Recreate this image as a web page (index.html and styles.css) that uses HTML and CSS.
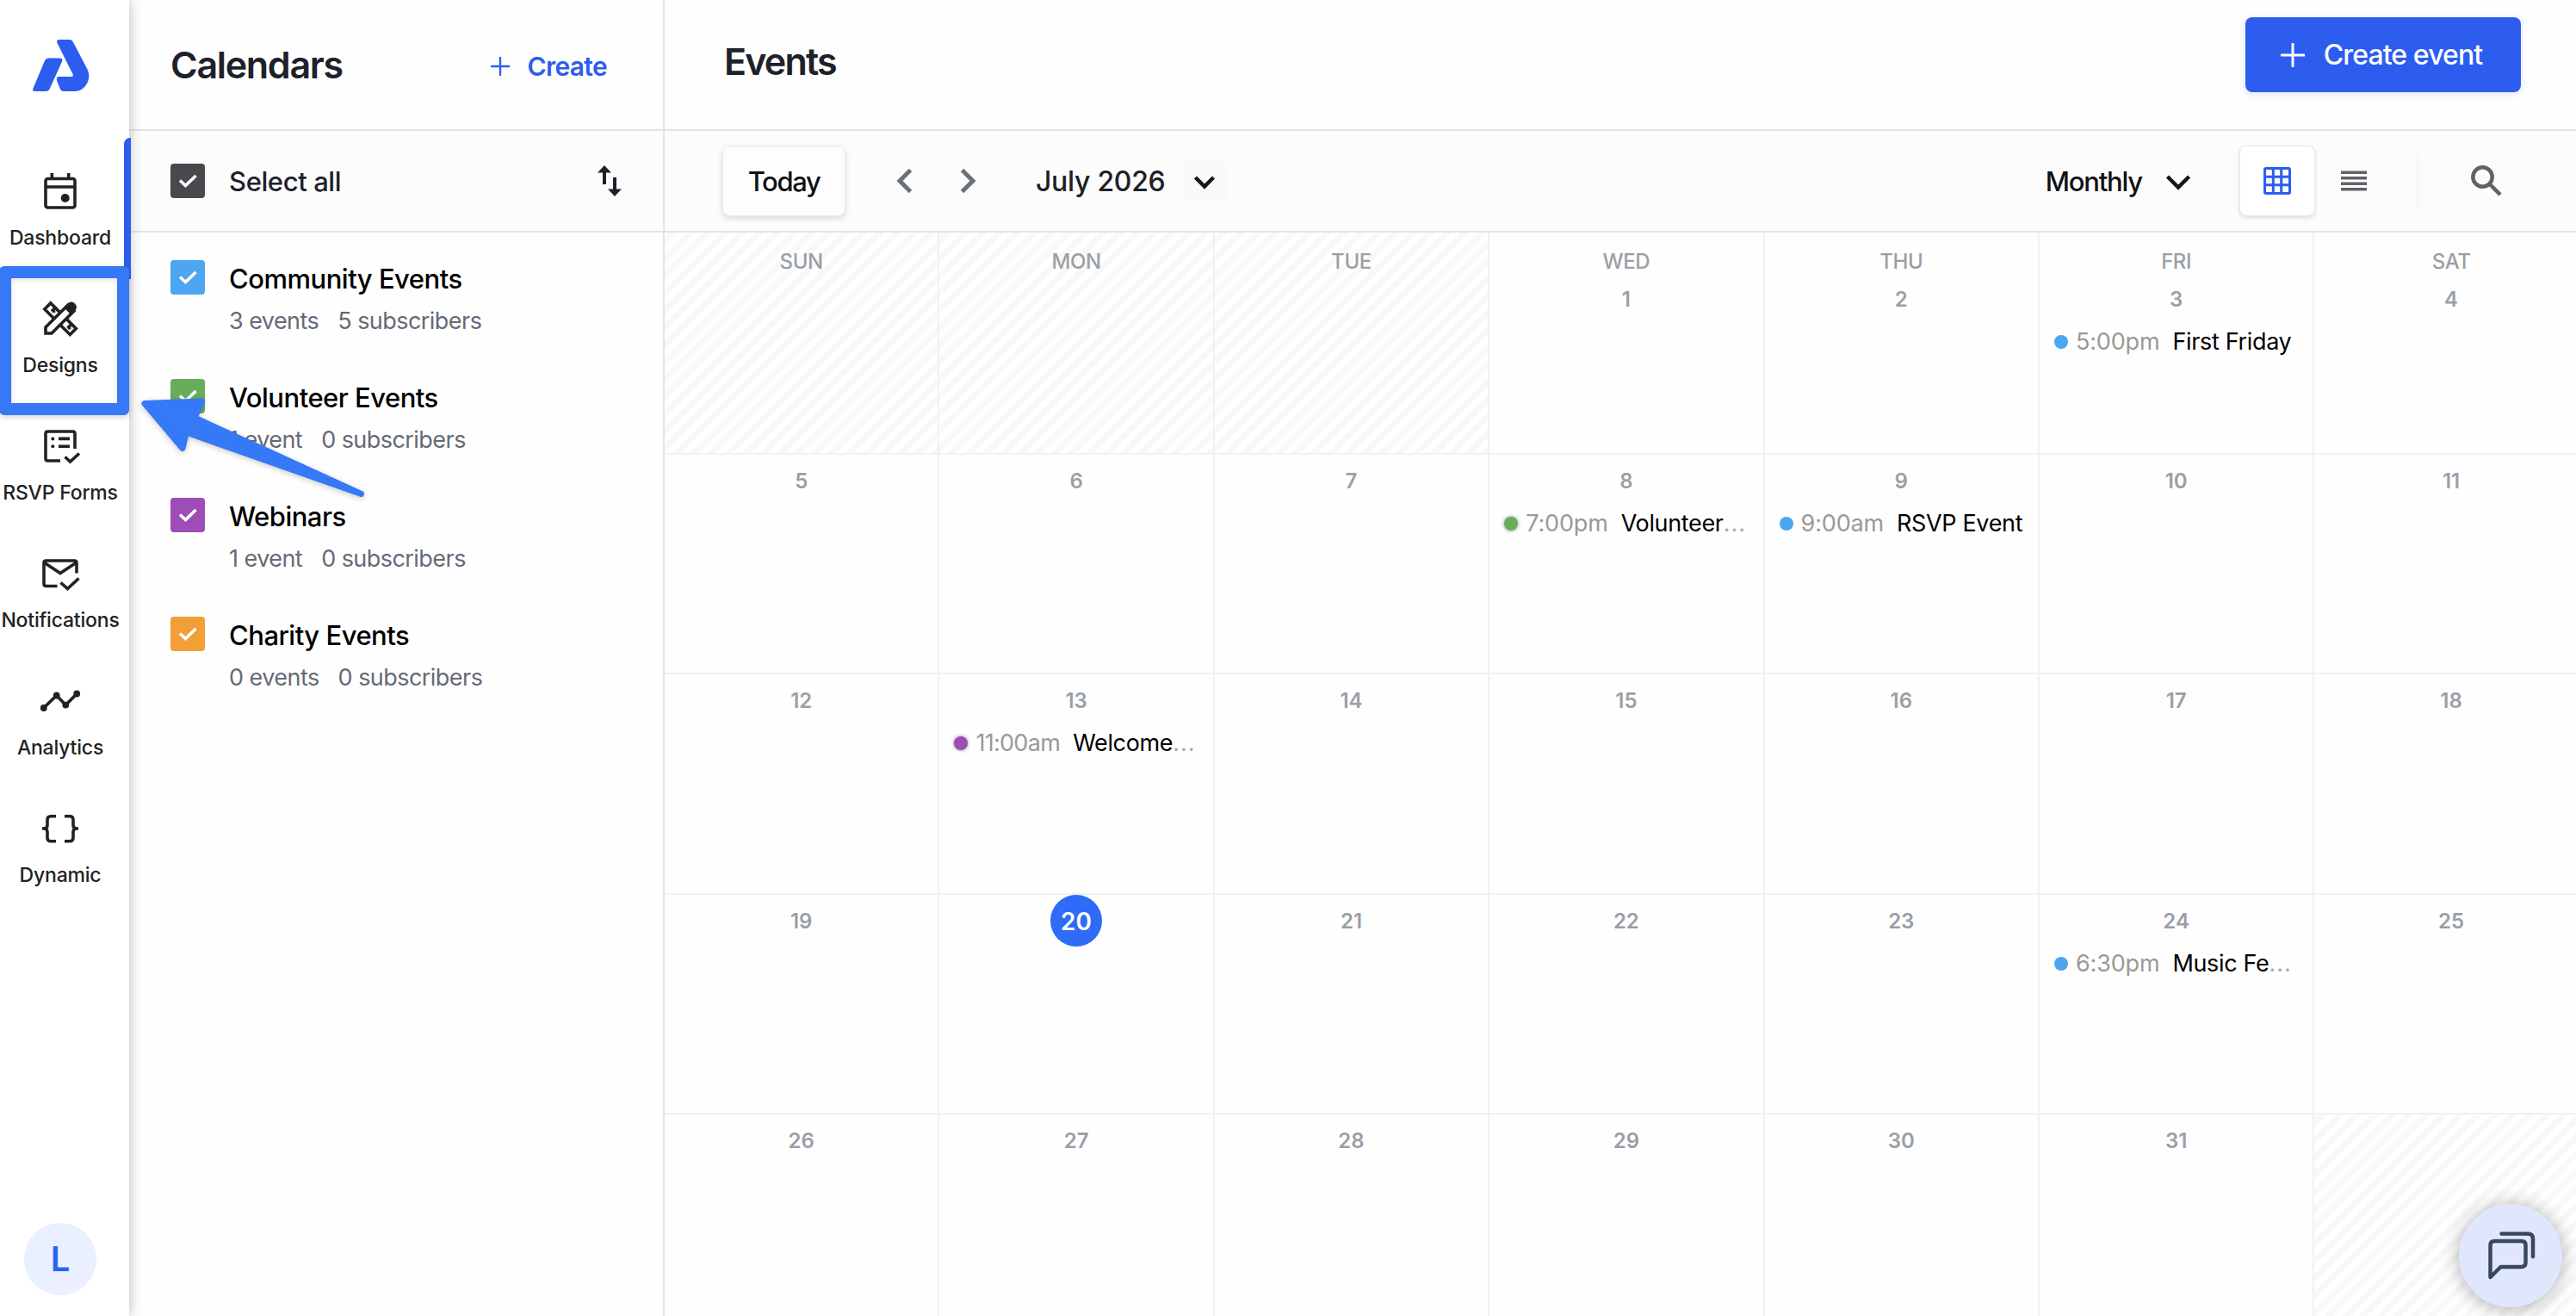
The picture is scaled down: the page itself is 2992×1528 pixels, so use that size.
FILE: index.html
```html
<!DOCTYPE html>
<html lang="en">
<head>
    <meta charset="UTF-8">
    <meta name="viewport" content="width=device-width, initial-scale=1">
    <title>Events</title>
    <link rel="stylesheet" href="styles.css">
</head>
<body>
    <svg width="0" height="0" class="sprite">
        <symbol id="check" viewBox="0 0 40 40">
            <path d="M11 19.500l6.500 6L29.500 14" fill="none" stroke="#fff" stroke-width="3.600"/>
        </symbol>
        <symbol id="plus" viewBox="0 0 28 28">
            <path d="M14 1v26M1 14h26" fill="none" stroke="currentColor" stroke-width="3" stroke-linecap="round"/>
        </symbol>
    </svg>

    <div class="app">
        <!-- left navigation -->
        <nav class="nav">
            <a class="logo">
                <svg width="66" height="60" viewBox="0 0 66 60">
                    <path d="M18.500 21.500h13q4 0 2.500 4L20 56.500q-1.500 3.500-5 3.500H2.500q-3.500 0-2-3.500L14 24.500q1.500-3 4.500-3z"/>
                    <path d="M31 0h11.500q3 0 4.500 3l16.500 31.500C69 46 61 60 48.500 60H36q-3.200 0-4.200-3L28 47.500q-1.200-4.500 3-4.500h13.500q3.500 0 2-3L28.500 4q-1.500-4 2.500-4z"/>
                </svg>
            </a>
            <ul class="nav-list">
                <li class="nav-item active">
                    <svg class="nav-icon" viewBox="0 0 48 48">
                        <rect x="7" y="9.500" width="34" height="33.500" rx="2.500"/>
                        <path d="M7 19h34M14.300 3v7M33.700 3v7"/>
                        <circle class="solid" cx="29.700" cy="32" r="5"/>
                    </svg>
                    <span>Dashboard</span>
                </li>
                <li class="nav-item">
                    <svg class="nav-icon" viewBox="0 0 48 48">
                        <path class="paper" d="M5.800 12.900l7-7 29.500 29.500-7 7z"/>
                        <path d="M18 11.500l-4 4M37 30.500l-4.500 4.500M16.500 14.500v2.500M34.500 34v2.500"/>
                        <path class="paper" d="M7 41v-7L33 8l7 7-26 26z"/>
                        <path class="solid" d="M28 11l4.500-4.500q4.500-4 8.500 0 3.800 4 0 8.500L36.500 19.500z"/>
                    </svg>
                    <span>Designs</span>
                </li>
                <li class="nav-item">
                    <svg class="nav-icon" viewBox="0 0 48 48">
                        <path d="M24 41H9.500q-2.500 0-2.500-2.500V9.500Q7 7 9.500 7h29q2.500 0 2.500 2.500V27M29.500 36.500l6 5.500L46 32.500M22 15.400h13M22 24.200h13"/>
                        <circle class="solid" cx="15.300" cy="15.400" r="2"/>
                        <circle class="solid" cx="15.300" cy="24.200" r="2"/>
                    </svg>
                    <span>RSVP Forms</span>
                </li>
                <li class="nav-item">
                    <svg class="nav-icon" viewBox="0 0 48 48">
                        <path d="M20.500 38.500H7.500Q5 38.500 5 36V11.500Q5 9 7.500 9h33q2.500 0 2.500 2.500V23.500M5 11l19 12.500L43 11M24.500 34.500l8 7L45.500 29.500"/>
                    </svg>
                    <span>Notifications</span>
                </li>
                <li class="nav-item">
                    <svg class="nav-icon" viewBox="0 0 48 48">
                        <path d="M4.300 32.400l15.400-14.900 10.600 11.100L43.700 15"/>
                        <circle class="solid" cx="4.800" cy="32" r="3.900"/>
                        <circle class="solid" cx="19.700" cy="17.500" r="3.900"/>
                        <circle class="solid" cx="30.300" cy="28.600" r="3.900"/>
                        <circle class="solid" cx="43.200" cy="15.500" r="3.900"/>
                    </svg>
                    <span>Analytics</span>
                </li>
                <li class="nav-item">
                    <svg class="nav-icon" viewBox="0 0 48 48">
                        <path d="M19 9.700h-6q-4 0-4 4V20q0 4-4 4h-2 2q4 0 4 4v6.700q0 4 4 4h6M29 9.700h6q4 0 4 4V20q0 4 4 4h2-2q-4 0-4 4v6.700q0 4-4 4h-6"/>
                    </svg>
                    <span>Dynamic</span>
                </li>
            </ul>
            <div class="avatar">L</div>
        </nav>

        <!-- calendars panel -->
        <aside class="calendars">
            <header class="calendars-head">
                <h2 class="calendars-title">Calendars</h2>
                <a class="create-link"><svg width="22" height="22"><use href="#plus"/></svg><span>Create</span></a>
            </header>
            <div class="select-all">
                <span class="checkbox dark"><svg><use href="#check"/></svg></span>
                <span class="select-all-text">Select all</span>
                <svg class="sort" width="30" height="38" viewBox="0 0 30 38">
                    <path d="M9 1l8 8.500h-6V23H7V9.500H1zM21 37l-8-8.500h6V15h4v13.500h6z"/>
                </svg>
            </div>
            <ul class="calendar-list">
                <li class="calendar-item">
                    <span class="checkbox blue"><svg><use href="#check"/></svg></span>
                    <div>
                        <div class="calendar-name">Community Events</div>
                        <div class="calendar-meta"><span>3 events</span><span>5 subscribers</span></div>
                    </div>
                </li>
                <li class="calendar-item">
                    <span class="checkbox green"><svg><use href="#check"/></svg></span>
                    <div>
                        <div class="calendar-name">Volunteer Events</div>
                        <div class="calendar-meta"><span>1 event</span><span>0 subscribers</span></div>
                    </div>
                </li>
                <li class="calendar-item">
                    <span class="checkbox purple"><svg><use href="#check"/></svg></span>
                    <div>
                        <div class="calendar-name">Webinars</div>
                        <div class="calendar-meta"><span>1 event</span><span>0 subscribers</span></div>
                    </div>
                </li>
                <li class="calendar-item">
                    <span class="checkbox orange"><svg><use href="#check"/></svg></span>
                    <div>
                        <div class="calendar-name">Charity Events</div>
                        <div class="calendar-meta"><span>0 events</span><span>0 subscribers</span></div>
                    </div>
                </li>
            </ul>
        </aside>

        <!-- events -->
        <main class="events">
            <header class="events-head">
                <h1 class="events-title">Events</h1>
                <button class="btn-create"><svg width="28" height="28"><use href="#plus"/></svg><span>Create event</span></button>
            </header>
            <div class="toolbar">
                <button class="btn-today">Today</button>
                <svg class="prev" width="20" height="30" viewBox="0 0 20 30"><path d="M16.500 2.500L4 15l12.500 12.500"/></svg>
                <svg class="next" width="20" height="30" viewBox="0 0 20 30"><path d="M3.500 2.500L16 15 3.500 27.500"/></svg>
                <span class="month">July 2026</span>
                <span class="month-toggle"><svg width="26" height="18" viewBox="0 0 26 18"><path d="M2.500 3L13 13.500 23.500 3"/></svg></span>
                <span class="view">Monthly</span>
                <svg class="view-arrow" width="30" height="20" viewBox="0 0 30 20"><path d="M2.500 3L15 15.500 27.500 3"/></svg>
                <span class="btn-grid">
                    <svg width="32" height="32" viewBox="0 0 32 32"><path d="M3 1.500h26q1.500 0 1.500 1.500v26q0 1.500-1.500 1.500H3q-1.500 0-1.500-1.500V3q0-1.500 1.500-1.500zM11.300 1.500v29M20.700 1.500v29M1.500 11.300h29M1.500 20.700h29"/></svg>
                </span>
                <svg class="list" width="30" height="24" viewBox="0 0 30 24"><path d="M0 2.300h30M0 8.800h30M0 15.200h30M0 21.700h30"/></svg>
                <span class="divider"></span>
                <svg class="search" width="36" height="36" viewBox="0 0 36 36"><circle cx="13.500" cy="13.500" r="11.200"/><path d="M21.500 21.500L34 34"/></svg>
            </div>

            <div class="month-grid">
                <div class="day off"><b>SUN</b></div>
                <div class="day off"><b>MON</b></div>
                <div class="day off"><b>TUE</b></div>
                <div class="day"><b>WED</b><i>1</i></div>
                <div class="day"><b>THU</b><i>2</i></div>
                <div class="day"><b>FRI</b><i>3</i>
                    <div class="event"><span class="dot blue"></span><span class="time">5:00pm</span><span class="name">First Friday</span></div>
                </div>
                <div class="day"><b>SAT</b><i>4</i></div>

                <div class="day"><i>5</i></div>
                <div class="day"><i>6</i></div>
                <div class="day"><i>7</i></div>
                <div class="day"><i>8</i>
                    <div class="event"><span class="dot green"></span><span class="time">7:00pm</span><span class="name">Volunteer</span><span class="more">...</span></div>
                </div>
                <div class="day"><i>9</i>
                    <div class="event"><span class="dot blue"></span><span class="time">9:00am</span><span class="name">RSVP Event</span></div>
                </div>
                <div class="day"><i>10</i></div>
                <div class="day"><i>11</i></div>

                <div class="day"><i>12</i></div>
                <div class="day"><i>13</i>
                    <div class="event"><span class="dot purple"></span><span class="time late">11:00am</span><span class="name">Welcome</span><span class="more">...</span></div>
                </div>
                <div class="day"><i>14</i></div>
                <div class="day"><i>15</i></div>
                <div class="day"><i>16</i></div>
                <div class="day"><i>17</i></div>
                <div class="day"><i>18</i></div>

                <div class="day"><i>19</i></div>
                <div class="day"><i class="today">20</i></div>
                <div class="day"><i>21</i></div>
                <div class="day"><i>22</i></div>
                <div class="day"><i>23</i></div>
                <div class="day"><i>24</i>
                    <div class="event"><span class="dot blue"></span><span class="time">6:30pm</span><span class="name">Music Fe</span><span class="more">...</span></div>
                </div>
                <div class="day"><i>25</i></div>

                <div class="day"><i>26</i></div>
                <div class="day"><i>27</i></div>
                <div class="day"><i>28</i></div>
                <div class="day"><i>29</i></div>
                <div class="day"><i>30</i></div>
                <div class="day"><i>31</i></div>
                <div class="day off"></div>
            </div>
        </main>
    </div>

    <!-- highlight over the Designs item -->
    <div class="marker"></div>
    <svg class="arrow" width="300" height="140" viewBox="0 0 300 140">
        <path d="M18 18.500L84.500 16 76 35 269.500 123.500 66.500 52 62 70.500z"/>
    </svg>

    <div class="chat">
        <svg width="60" height="60" viewBox="0 0 60 60">
            <path d="M6.500 51V14q0-5 5-5h31q5 0 5 5v20q0 5-5 5H18.500zM19.500 .5H50q6 0 6 6V27"/>
        </svg>
    </div>
</body>
</html>
```
FILE: styles.css
```css
*{
    box-sizing: border-box;
}
body{
    margin: 0;
    height: 1528px;
    overflow: hidden;
    position: relative;
    background-color: #fefefe;
    color: #1d2129;
    font-family: Inter, "Liberation Sans", sans-serif;
    font-weight: 500;
}
h1, h2, ul{
    margin: 0;
    padding: 0;
    list-style: none;
}
button{
    font: inherit;
    border: 0;
    padding: 0;
}
svg{
    display: block;
    flex: none;
    overflow: visible;
}
.sprite{
    position: absolute;
}
.app{
    display: flex;
    height: 1528px;
}

/* nav */
.nav{
    position: relative;
    z-index: 1;
    flex: none;
    width: 150px;
    padding-right: 10px;
    display: flex;
    flex-direction: column;
    align-items: center;
    background-color: #fff;
    box-shadow: 0 0 14px rgba(0, 0, 0, .28);
}
.logo{
    height: 160px;
    padding: 46px 0 0 1px;
    fill: #2c5def;
}
.nav-list{
    flex: 1;
    width: 140px;
}
.nav-item{
    position: relative;
    height: 148px;
    padding-top: 38px;
    display: flex;
    flex-direction: column;
    align-items: center;
    color: #222;
    font-size: 23px;
    line-height: 30px;
    letter-spacing: -.2px;
    white-space: nowrap;
}
.nav-item.active::after{
    content: "";
    position: absolute;
    left: 144px;
    top: 0;
    width: 8px;
    height: 164px;
    border-radius: 7px 0 0 0;
    background-color: #2c5def;
}
.nav-icon{
    width: 48px;
    height: 48px;
    margin-bottom: 15px;
    fill: none;
    stroke: #222;
    stroke-width: 3.6;
}
.nav-icon .solid{
    fill: #222;
    stroke: none;
}
.nav-icon .paper{
    fill: #fff;
}
.avatar{
    width: 84px;
    height: 84px;
    margin-bottom: 24px;
    border-radius: 50%;
    background-color: #eaf0ff;
    color: #2962f6;
    font-size: 40px;
    font-weight: 600;
    line-height: 84px;
    text-align: center;
}

/* calendars panel */
.calendars{
    flex: none;
    width: 622px;
    border-right: 2px solid #e3e3e3;
}
.calendars-head{
    height: 152px;
    padding: 2px 65px 2px 48px;
    display: flex;
    align-items: center;
    justify-content: space-between;
    border-bottom: 2px solid #e3e3e3;
}
.calendars-title{
    font-size: 43px;
    font-weight: 600;
    letter-spacing: -1.3px;
}
.create-link{
    display: flex;
    align-items: center;
    gap: 21px;
    padding-top: 4px;
    color: #2c5def;
    font-size: 30px;
    font-weight: 600;
    letter-spacing: -.7px;
}
.select-all{
    height: 118px;
    padding: 0 47px 0 48px;
    display: flex;
    align-items: center;
    background-color: #fcfcfc;
    border-bottom: 2px solid #e3e3e3;
    font-size: 31px;
}
.select-all-text{
    flex: 1;
    margin-left: 28px;
    letter-spacing: -.4px;
}
.sort{
    fill: #1d2129;
}
.checkbox{
    flex: none;
    width: 40px;
    height: 40px;
    border-radius: 4px;
}
.checkbox svg{
    width: 40px;
    height: 40px;
}
.dark{ background-color: #47494d; }
.blue{ background-color: #4da6ef; }
.green{ background-color: #68ac5c; }
.purple{ background-color: #9f4db6; }
.orange{ background-color: #f29f38; }
.calendar-list{
    padding: 32px 0 0 48px;
}
.calendar-item{
    height: 138px;
    display: flex;
    gap: 28px;
    color: #000;
}
.calendar-name{
    font-size: 31px;
    line-height: 44px;
    letter-spacing: -.5px;
}
.calendar-meta{
    display: flex;
    gap: 22px;
    margin-top: 9px;
    font-size: 27px;
    font-weight: 400;
    line-height: 36px;
    letter-spacing: -.55px;
    color: #666a76;
}

/* events */
.events{
    flex: 1;
    min-width: 0;
    overflow: hidden;
}
.events-head{
    height: 152px;
    padding: 0 64px 0 69px;
    display: flex;
    justify-content: space-between;
    border-bottom: 2px solid #e3e3e3;
}
.events-title{
    font-size: 43px;
    font-weight: 600;
    line-height: 143px;
    letter-spacing: -1.8px;
}
.btn-create{
    width: 320px;
    height: 87px;
    margin-top: 20px;
    display: flex;
    align-items: center;
    justify-content: center;
    gap: 22px;
    border-radius: 8px;
    background-color: #2c5def;
    box-shadow: 0 2px 8px rgba(44, 93, 239, .16);
    color: #fff;
    font-size: 32px;
    letter-spacing: -.9px;
}
.btn-create svg{
    margin-left: -4px;
}
.toolbar{
    height: 118px;
    padding: 0 86px 0 67px;
    display: flex;
    align-items: center;
    background-color: #fcfcfc;
    border-bottom: 2px solid #e3e3e3;
}
.toolbar svg{
    fill: none;
    stroke: #16181c;
    stroke-width: 4.500;
}
.btn-today{
    width: 143px;
    height: 82px;
    border: 1px solid #e9e9ee;
    border-radius: 8px;
    background-color: #fdfdfe;
    box-shadow: 0 3px 6px rgba(30, 30, 60, .14);
    color: #111;
    font-size: 31px;
    letter-spacing: -1.4px;
}
.toolbar .prev,
.toolbar .next{
    stroke: #6b7178;
    stroke-width: 5;
}
.prev{
    margin-left: 59px;
}
.next{
    margin-left: 53px;
}
.month{
    width: 170px;
    margin-left: 69px;
    font-size: 32px;
    letter-spacing: -.3px;
    white-space: nowrap;
}
.month-toggle{
    width: 52px;
    height: 52px;
    margin-right: auto;
    display: flex;
    align-items: center;
    justify-content: center;
    padding-top: 4px;
    border-radius: 8px;
    background-color: #fafafa;
}
.view{
    color: #111;
    font-size: 31px;
    letter-spacing: -1.2px;
}
.view-arrow{
    margin: 4px 56px 0 27px;
}
.btn-grid{
    width: 88px;
    height: 82px;
    display: flex;
    align-items: center;
    justify-content: center;
    border: 1px solid #e8e8ea;
    border-radius: 8px;
    background-color: #fff;
    box-shadow: 0 2px 4px rgba(30, 30, 60, .14);
}
.toolbar .btn-grid svg{
    stroke: #2c5def;
    stroke-width: 3;
}
.toolbar .list,
.toolbar .search{
    stroke: #5f6267;
}
.toolbar .list{
    margin-left: 30px;
    stroke-width: 3.600;
}
.divider{
    width: 2px;
    height: 66px;
    margin: 0 61px 0 58px;
    background-color: #f3f3f3;
}

/* month grid */
.month-grid{
    width: 2236.5px;
    display: grid;
    grid-template-columns: repeat(7, 319.4px);
    grid-template-rows: 258px repeat(4, 255.400px);
}
.day{
    padding-top: 9px;
    border-right: 2px solid #f1f1f2;
    border-bottom: 2px solid #f1f1f2;
    color: #9a9fa6;
    font-size: 24px;
    line-height: 44px;
}
.day b,
.day i{
    display: block;
    font-style: normal;
    font-weight: 600;
    text-align: center;
}
.day b{
    margin-top: 3px;
    font-weight: 500;
    letter-spacing: -.4px;
}
.off{
    background-image: linear-gradient(135deg, #fff 25%, #f8f8f8 25%, #f8f8f8 50%, #fff 50%, #fff 75%, #f8f8f8 75%);
    background-size: 20px 20px;
    background-position: -4px 0;
}
.day .today{
    width: 60px;
    height: 60px;
    margin: -9px auto 0;
    border-radius: 50%;
    background-color: #2e6bf6;
    color: #fff;
    font-size: 28px;
    line-height: 62px;
}
.event{
    display: flex;
    align-items: center;
    margin: 5px 17px 0;
    color: #000;
    font-size: 27px;
    font-weight: 400;
    white-space: nowrap;
}
.dot{
    flex: none;
    width: 16px;
    height: 16px;
    margin-right: 9px;
    border-radius: 50%;
}
.dot.green,
.dot.purple{
    box-shadow: 0 0 4px rgba(0, 0, 0, .45);
}
.time{
    margin-right: 15px;
    color: #999;
    letter-spacing: -.15px;
}
.time.late{
    letter-spacing: -.7px;
}
.name{
    letter-spacing: -.35px;
}
.more{
    color: #aaa;
    letter-spacing: 1px;
}

/* overlays */
.marker{
    position: absolute;
    z-index: 2;
    left: -1px;
    top: 309px;
    width: 151px;
    height: 173px;
    border: 14px solid #3579f6;
    border-radius: 6px;
    box-shadow: 0 2px 6px rgba(0, 0, 0, .2), inset 0 2px 6px rgba(0, 0, 0, .12);
}
.arrow{
    position: absolute;
    z-index: 3;
    left: 150px;
    top: 450px;
    fill: #3579f6;
    stroke: #3579f6;
    stroke-width: 7;
    stroke-linejoin: round;
    filter: drop-shadow(0 2px 3px rgba(0, 0, 0, .2));
}
.chat{
    position: absolute;
    z-index: 3;
    left: 2856px;
    top: 1398px;
    width: 120px;
    height: 120px;
    padding: 34px 0 0 30px;
    border-radius: 50%;
    background-color: #e0e6fb;
    box-shadow: 0 2px 22px rgba(0, 0, 0, .32);
}
.chat svg{
    fill: none;
    stroke: #38495d;
    stroke-width: 4.500;
    stroke-linecap: round;
    stroke-linejoin: round;
}
```
